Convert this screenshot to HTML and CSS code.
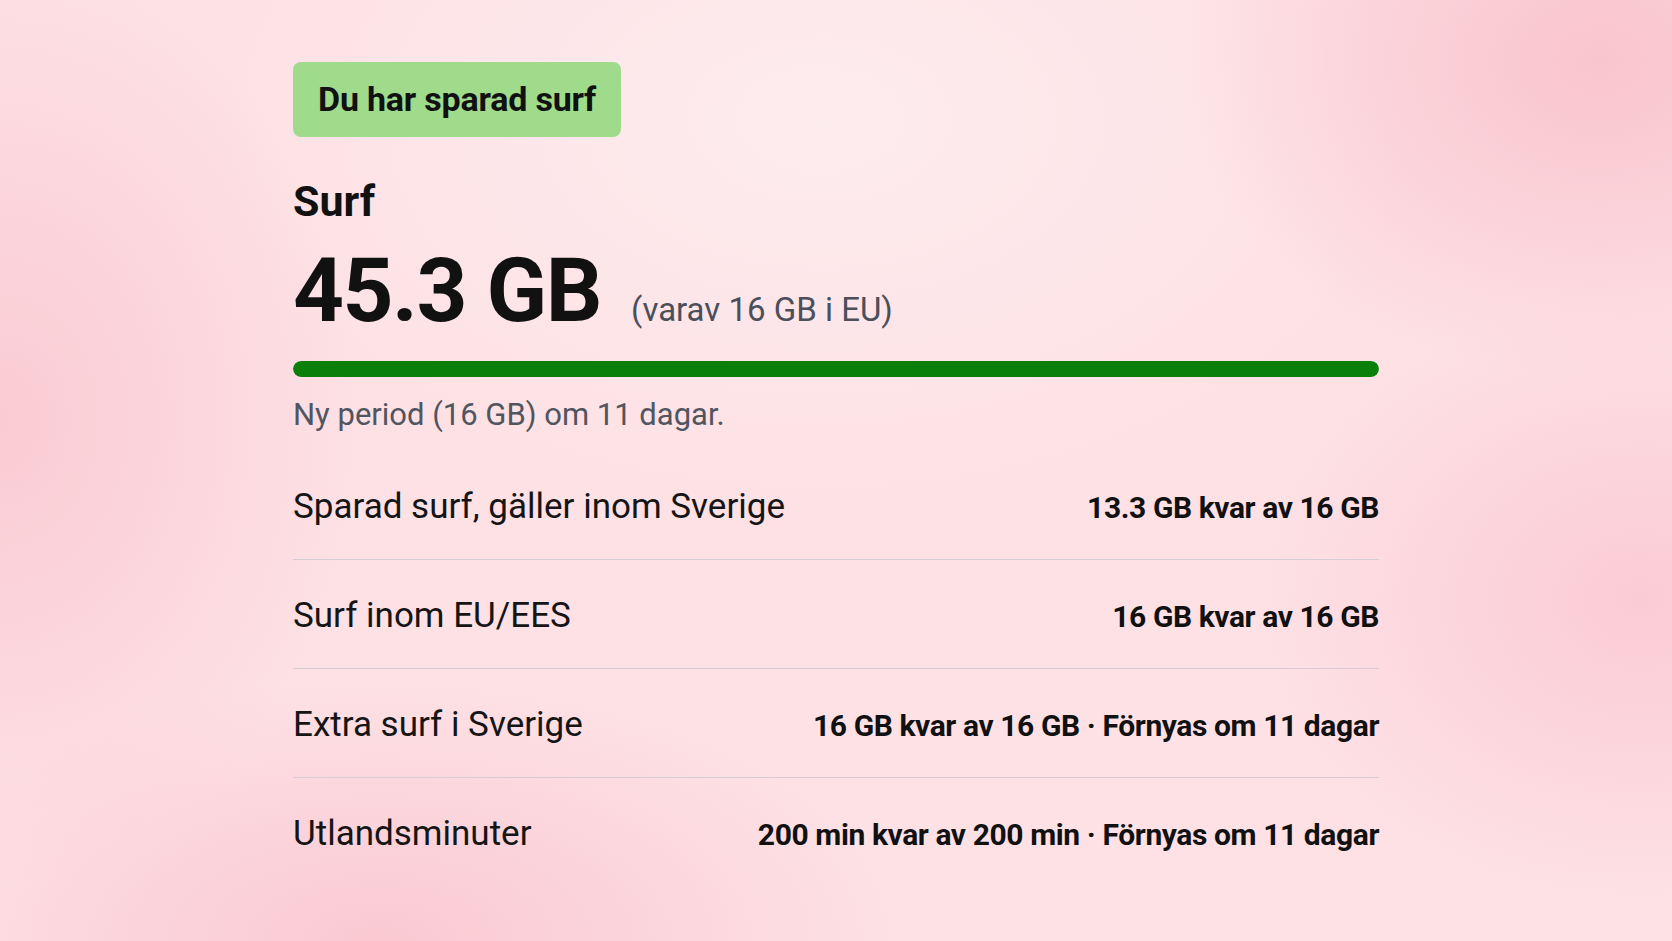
FILE: index.html
```html
<!DOCTYPE html>
<html lang="sv">
<head>
  <meta charset="UTF-8">
  <meta name="viewport" content="width=device-width, initial-scale=1.0">
  <title>Surf</title>
  <link rel="stylesheet" href="styles.css">
</head>
<body>

  <div class="usage">
    <div class="badge">Du har sparad surf</div>

    <h2 class="title">Surf</h2>

    <div class="amount">
      <span class="amount-value">45.3 GB</span>
      <span class="amount-note">(varav 16 GB i EU)</span>
    </div>

    <div class="bar"><div class="bar-fill" style="width: 100%"></div></div>

    <p class="period">Ny period (16 GB) om 11 dagar.</p>

    <div class="rows">
      <div class="row">
        <span class="row-label">Sparad surf, gäller inom Sverige</span>
        <span class="row-value">13.3 GB kvar av 16 GB</span>
      </div>
      <div class="row">
        <span class="row-label">Surf inom EU/EES</span>
        <span class="row-value">16 GB kvar av 16 GB</span>
      </div>
      <div class="row">
        <span class="row-label">Extra surf i Sverige</span>
        <span class="row-value">16 GB kvar av 16 GB · Förnyas om 11 dagar</span>
      </div>
      <div class="row last">
        <span class="row-label">Utlandsminuter</span>
        <span class="row-value">200 min kvar av 200 min · Förnyas om 11 dagar</span>
      </div>
    </div>
  </div>

</body>
</html>
```

FILE: styles.css
```css
html {
  min-height: 100%;
}

body {
  font-family: Roboto, "Liberation Sans", sans-serif;
  margin: 0;
  min-height: 941px;
  color: #111;
  background-color: #fde1e5;
  background-image:
    radial-gradient(ellipse 420px 320px at 1600px 60px, #f9c4cd 0%, rgba(249, 196, 205, 0) 100%),
    radial-gradient(ellipse 360px 460px at 0px 420px, #facbd3 0%, rgba(250, 203, 211, 0) 100%),
    radial-gradient(ellipse 520px 260px at 380px 941px, #fac9d2 0%, rgba(250, 201, 210, 0) 100%),
    radial-gradient(ellipse 380px 300px at 1640px 600px, #fbcbd4 0%, rgba(251, 203, 212, 0) 100%),
    radial-gradient(ellipse 600px 380px at 820px 120px, #fdecee 0%, rgba(253, 236, 238, 0) 100%);
  background-repeat: no-repeat;
}

.usage {
  width: 1086px;
  margin: 0 auto;
  padding-top: 62px;
}

.badge {
  display: inline-block;
  background-color: #9fdb8b;
  border-radius: 8px;
  padding: 17px 25px;
  font-size: 34px;
  line-height: 41px;
  font-weight: 700;
  letter-spacing: -0.2px;
  color: #111;
}

.title {
  margin: 38px 0 0;
  font-size: 43px;
  line-height: 52px;
  font-weight: 700;
}

.amount {
  display: flex;
  align-items: baseline;
  gap: 30px;
  margin-top: 20px;
}

.amount-value {
  font-size: 89px;
  line-height: 88px;
  font-weight: 700;
  letter-spacing: -1.5px;
}

.amount-note {
  font-size: 33px;
  color: #4b4f5a;
}

.bar {
  height: 16px;
  margin-top: 26px;
  border-radius: 8px;
  background-color: #e3d3d8;
  overflow: hidden;
}

.bar-fill {
  height: 100%;
  border-radius: 8px;
  background-color: #0a800a;
}

.period {
  margin: 20px 0 0;
  font-size: 31px;
  line-height: 36px;
  color: #51555f;
}

.rows {
  margin-top: 18px;
}

.row {
  display: flex;
  justify-content: space-between;
  align-items: baseline;
  padding: 35px 0 30px;
  border-bottom: 1px solid #d6ccd6;
  line-height: 42px;
}

.row.last {
  border-bottom: none;
}

.row-label {
  font-size: 35px;
  color: #151515;
}

.row-value {
  font-size: 30px;
  font-weight: 700;
  letter-spacing: -0.4px;
  color: #111;
}
```
